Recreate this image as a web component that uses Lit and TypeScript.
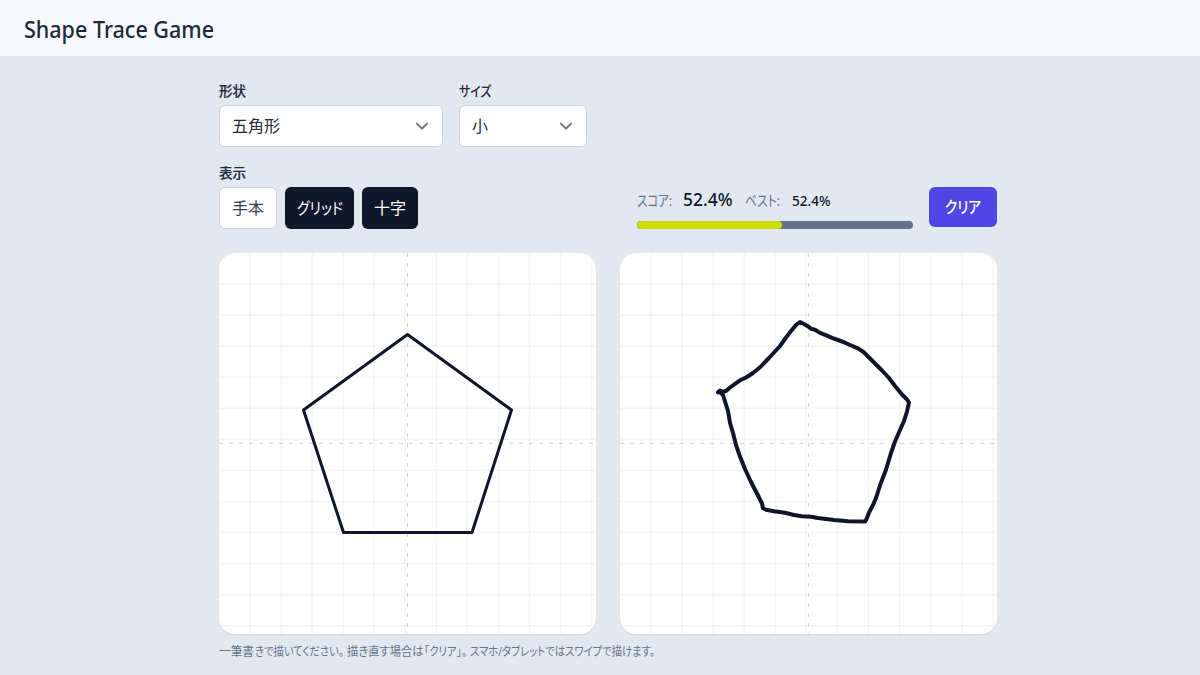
import { LitElement, html, svg, css } from "lit";
import { customElement, property } from "lit/decorators.js";

const W = 377;
const H = 381;
const STEP = 31.06;

const PENTAGON = "188.5,81.5 292.5,157 253,279.5 124.5,279.5 84.5,157";

const TRACE: [number, number][] = [
  [718, 392.3], [720, 390.5], [722.5, 391.8], [726, 391], [730, 387.5], [735, 383.8], [740, 380.3], [746, 377.5], [753, 373],
  [760, 367.3], [769, 358], [780, 346], [786, 337.5], [791.7, 330.2], [796, 325], [800, 322], [804, 324],
  [809, 327], [811, 328.8], [815, 329.7], [820, 332.9], [827, 335.6], [832, 337.8], [838, 340], [845, 342.7],
  [850, 345], [858, 348.4], [863.5, 352], [869, 357.5], [875, 363.5], [882, 370.5], [889, 378], [895, 386],
  [902, 394.5], [907, 399.5], [909, 402.5], [907, 411.5], [904, 421], [900, 430], [895, 441.5], [891, 453], [888, 463], [885.5, 471],
  [880.5, 484], [876, 498], [873, 505], [869, 512.5], [867, 518], [865.3, 521.4], [848, 521.3], [840, 520.5],
  [834, 520], [826, 519], [818, 518], [811, 516.8], [802, 516.2], [794, 515], [785, 512.8], [774, 511.2],
  [766, 509.8], [763, 508.3], [762, 503.5], [758, 495.5], [751, 482], [745, 469], [740, 456.5], [736, 445],
  [733, 433], [730, 423], [728, 411], [725, 401.5], [723, 395], [719, 391.5],
];

/* Hint text split into runs: [text, advance, drawn width] */
const HINT: [string, number, number][] = [
  ["一筆書", 35.8, 35], ["きで描いてください。", 92, 89], ["描き直す場合は", 77.7, 76.5], ["「クリア」。", 46, 43],
  ["スマホ/タブレットではスワイプで描けます。", 187, 185],
];

@customElement("trace-board")
export class TraceBoard extends LitElement {
  @property() mode = "model";

  static styles = css`
    :host { display: block; border-radius: 16px; overflow: hidden; background: #fff; box-shadow: 0 1px 2px rgba(15, 23, 42, 0.07); }
    svg { display: block; width: 377px; height: 381px; }
    .grid { stroke: #0f172a; stroke-opacity: 0.042; stroke-width: 1.5; fill: none; }
    .cross { stroke: #0f172a; stroke-opacity: 0.18; stroke-width: 1; stroke-dasharray: 4 6; fill: none; }
    .model { stroke: #111529; stroke-width: 3; fill: none; stroke-linejoin: round; }
    .trace { stroke: #111529; stroke-width: 4; fill: none; stroke-linejoin: round; stroke-linecap: round; }
  `;

  render() {
    const lines = Array.from({ length: 12 }, (_, i) => (i + 1) * STEP);
    const trace = TRACE.map(([x, y]) => `${(x - 620).toFixed(1)},${(y - 253).toFixed(1)}`).join(" ");
    return html`<svg viewBox="0 0 ${W} ${H}">
      ${lines.map((p) => svg`<path class="grid" d="M${p} 0V${H}M0 ${p}H${W}"/>`)}
      <path class="cross" d="M188.5 0V381" /><path class="cross" d="M0 190.5H377" />
      ${this.mode === "model"
        ? svg`<polygon class="model" points=${PENTAGON} />`
        : svg`<polyline class="trace" points=${trace} />`}
    </svg>`;
  }
}

/* Text condensed to a fixed drawn width; the advance may be larger. */
const fit = (text: string, width: number, advance = width, base = 16) =>
  html`<svg class="fit" width=${advance} height="20"><text y=${base} textLength=${width} lengthAdjust="spacingAndGlyphs">${text}</text></svg>`;

@customElement("app-root")
export class AppRoot extends LitElement {
  static styles = css`
    :host { display: block; height: 675px; overflow: hidden; background: #e2e8f0; color: #1e293b;
      font-family: "Noto Sans", "Noto Sans CJK JP", sans-serif; font-feature-settings: "palt"; }
    * { box-sizing: border-box; }
    .fit { display: block; flex: none; overflow: visible; fill: currentColor; }
    header { height: 56px; padding: 0 24px 0; background: #f7f9fd; display: flex; align-items: center; }
    h1 { margin: 0; font: 500 24px/24px "Noto Sans", sans-serif; padding-top: 8px; -webkit-text-stroke: 0.25px; }
    main { width: 778px; margin-left: 219px; padding-top: 25px; }
    .selects { display: flex; gap: 16px; }
    .label { font-size: 13.5px; font-weight: 500; line-height: 20px; height: 24px; -webkit-text-stroke: 0.2px; }
    .select { height: 42px; border: 1px solid #cbd5e1; border-radius: 6px; background: #fff; padding: 0 13px 0 12px;
      display: flex; align-items: center; justify-content: space-between; font-size: 16px; line-height: 24px; }
    .shape { width: 224px; }
    .size { width: 128px; }
    .chev { width: 14px; height: 14px; fill: none; stroke: #6b6f76; stroke-width: 1.9; stroke-linecap: round; stroke-linejoin: round; }
    .bar { display: flex; justify-content: space-between; align-items: flex-end; margin-top: 16px; height: 66px; }
    .toggles { display: flex; gap: 8px; }
    .btn { height: 42px; border-radius: 6px; font-size: 16px; line-height: 24px; display: flex; align-items: center; justify-content: center; }
    .off { width: 58px; background: #fff; border: 1px solid #cbd5e1; color: #334155; }
    .on { background: #0f172a; color: #fff; }
    .w69 { width: 69px; }
    .w56 { width: 56px; }
    .score { display: flex; align-items: flex-end; gap: 16px; height: 42px; }
    .meter { width: 276px; }
    .nums { display: flex; align-items: center; height: 20px; margin-bottom: 11px; font-size: 14.5px; color: #64748b; }
    .big { font-size: 18px; font-weight: 500; color: #0f172a; }
    .small { font-size: 13.5px; font-weight: 500; color: #0f172a; }
    .track { height: 8px; border-radius: 4px; background: #64748b; overflow: hidden; }
    .fill { height: 8px; border-radius: 4px; background: #cddc05; }
    .clear { width: 68px; height: 40px; background: #4f46e5; color: #fff; font-weight: 500; margin-bottom: 2px; }
    .boards { display: grid; grid-template-columns: 377px 377px; gap: 24px; margin-top: 24px; }
    .hint { display: flex; margin: 6px 0 0; font-size: 12px; color: #64748b; }
  `;

  private score = 52.4;

  private chevron() {
    return html`<svg class="chev" viewBox="0 0 14 14"><path d="M1.9 4.6 7 9.7l5.1-5.1" /></svg>`;
  }

  render() {
    return html`
      <header><h1>${fit("Shape Trace Game", 190)}</h1></header>
      <main>
        <div class="selects">
          <div class="shape"><div class="label">形状</div><div class="select"><span>五角形</span>${this.chevron()}</div></div>
          <div class="size"><div class="label">${fit("サイズ", 32.5, 32.5, 15)}</div><div class="select"><span>小</span>${this.chevron()}</div></div>
        </div>
        <div class="bar">
          <div>
            <div class="label">表示</div>
            <div class="toggles">
              <div class="btn off"><span>手本</span></div>
              <div class="btn on w69">${fit("グリッド", 46)}</div>
              <div class="btn on w56"><span>十字</span></div>
            </div>
          </div>
          <div class="score">
            <div class="meter">
              <div class="nums">
                ${fit("スコア:", 35, 46)}
                <div class="big">${fit(`${this.score}%`, 49.5, 62)}</div>
                ${fit("ベスト:", 35, 46.5)}
                <div class="small">${fit(`${this.score}%`, 38.5)}</div>
              </div>
              <div class="track"><div class="fill" style="width:${this.score}%"></div></div>
            </div>
            <div class="btn clear">${fit("クリア", 36)}</div>
          </div>
        </div>
        <div class="boards"><trace-board mode="model"></trace-board><trace-board mode="trace"></trace-board></div>
        <div class="hint">${HINT.map(([t, adv, w]) => fit(t, w, adv))}</div>
      </main>
    `;
  }
}
